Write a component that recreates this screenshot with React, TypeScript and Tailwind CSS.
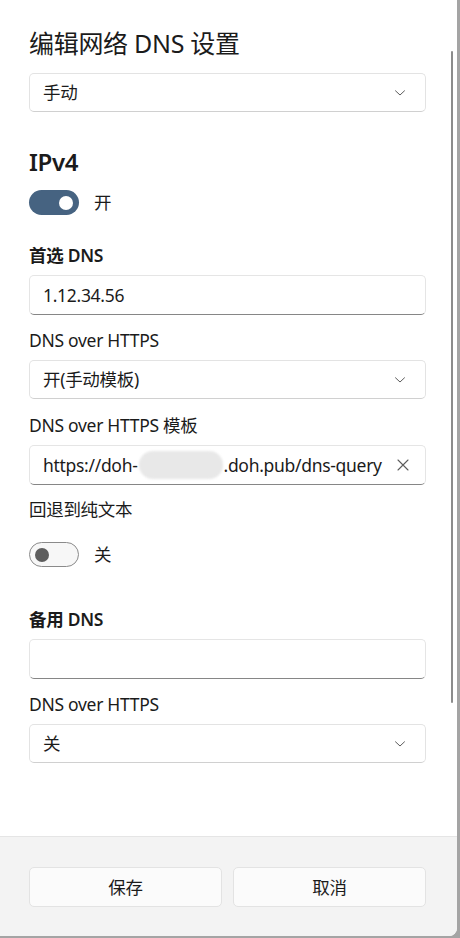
import { ReactNode } from "react";

const FONT = { fontFamily: '"Noto Sans", "Noto Sans CJK SC", sans-serif' };

function Chevron() {
  return (
    <svg width="12" height="8" viewBox="0 0 12 8" className="shrink-0">
      <path d="M1.5 1.8 L6 6 L10.5 1.8" fill="none" stroke="#5c5c5c" strokeWidth="1" strokeLinecap="round" strokeLinejoin="round" />
    </svg>
  );
}

function ClearIcon() {
  return (
    <svg width="12" height="12" viewBox="0 0 12 12" className="shrink-0">
      <path d="M1 1 L11 11 M11 1 L1 11" fill="none" stroke="#5c5c5c" strokeWidth="1.1" strokeLinecap="round" />
    </svg>
  );
}

function Select({ value, className }: { value: string; className?: string }) {
  return (
    <div
      className={`flex h-[39px] items-center justify-between rounded-[5px] border border-[#e3e3e3] border-b-[#d0d0d0] bg-white pl-[13px] pr-[19px] text-[17.5px] text-[#1b1b1b] ${className ?? ""}`}
    >
      <span className="leading-none">{value}</span>
      <Chevron />
    </div>
  );
}

function Input({ children, className }: { children?: ReactNode; className?: string }) {
  return (
    <div
      className={`flex h-[40px] items-center rounded-[5px] border border-[#e5e5e5] border-b-[#868686] bg-white pl-[13px] pr-[16px] text-[17.5px] text-[#1b1b1b] ${className ?? ""}`}
    >
      {children}
    </div>
  );
}

function Label({ children, bold, className }: { children: ReactNode; bold?: boolean; className?: string }) {
  return (
    <div className={`h-[24px] text-[17.5px] leading-[24px] text-[#1b1b1b] ${bold ? "font-semibold" : ""} ${className ?? ""}`}>
      {children}
    </div>
  );
}

function Toggle({ on, label, className }: { on: boolean; label: string; className?: string }) {
  return (
    <div className={`flex h-[25px] items-center gap-[15px] ${className ?? ""}`}>
      {on ? (
        <div className="relative h-[25px] w-[50px] rounded-full bg-[#466381]">
          <div className="absolute right-[6px] top-[5.5px] h-[14px] w-[14px] rounded-full bg-white" />
        </div>
      ) : (
        <div className="relative h-[25px] w-[50px] rounded-full border border-[#8a8a8a] bg-[#f7f7f7]">
          <div className="absolute left-[5px] top-[4.5px] h-[14px] w-[14px] rounded-full bg-[#5d5d5d]" />
        </div>
      )}
      <span className="text-[17.5px] text-[#1b1b1b]">{label}</span>
    </div>
  );
}

export default function App() {
  return (
    <div className="h-[938px] w-[460px] overflow-hidden bg-[#a4a4a4] tracking-[-0.3px]" style={FONT}>
      <div className="relative flex h-[936px] w-[457px] flex-col rounded-br-[8px] bg-white">
        <div className="flex flex-1 flex-col pl-[29px] pr-[31px] pt-[27px]">
          <h1 className="h-[32px] text-[25px] leading-[32px] text-[#1b1b1b]">编辑网络 DNS 设置</h1>
          <Select value="手动" className="mt-[14px]" />

          <div className="mt-[34px] h-[32px] text-[24px] font-semibold leading-[32px] text-[#1b1b1b]">IPv4</div>
          <Toggle on label="开" className="mt-[12px]" />

          <Label bold className="mt-[28px]">首选 DNS</Label>
          <Input className="mt-[8px]">1.12.34.56</Input>

          <Label className="mt-[13px]">DNS over HTTPS</Label>
          <Select value="开(手动模板)" className="mt-[8px]" />

          <Label className="mt-[14px]">DNS over HTTPS 模板</Label>
          <Input className="mt-[8px] justify-between">
            <span className="flex items-center whitespace-nowrap">
              https://doh-
              <span className="mx-[1px] inline-block h-[28px] w-[84px] rounded-[14px] bg-[#e8e8e8] blur-[1px]" />
              .doh.pub/dns-query
            </span>
            <ClearIcon />
          </Input>

          <Label className="mt-[12px]">回退到纯文本</Label>
          <Toggle on={false} label="关" className="mt-[21px]" />

          <Label bold className="mt-[40px]">备用 DNS</Label>
          <Input className="mt-[8px]" />

          <Label className="mt-[13px]">DNS over HTTPS</Label>
          <Select value="关" className="mt-[8px]" />
        </div>

        <div className="flex h-[100px] gap-[11px] rounded-br-[8px] border-t border-[#e5e5e5] bg-[#f3f3f3] pl-[29px] pr-[31px] pt-[30px]">
          <button className="h-[40px] flex-1 rounded-[5px] border border-[#e3e3e3] bg-[#fbfbfb] text-[17.5px] text-[#1b1b1b]">保存</button>
          <button className="h-[40px] flex-1 rounded-[5px] border border-[#e3e3e3] bg-[#fbfbfb] text-[17.5px] text-[#1b1b1b]">取消</button>
        </div>

        <div className="absolute left-[451px] top-[51px] h-[652px] w-[2px] rounded-full bg-[#8c8c8c]" />
      </div>
    </div>
  );
}
